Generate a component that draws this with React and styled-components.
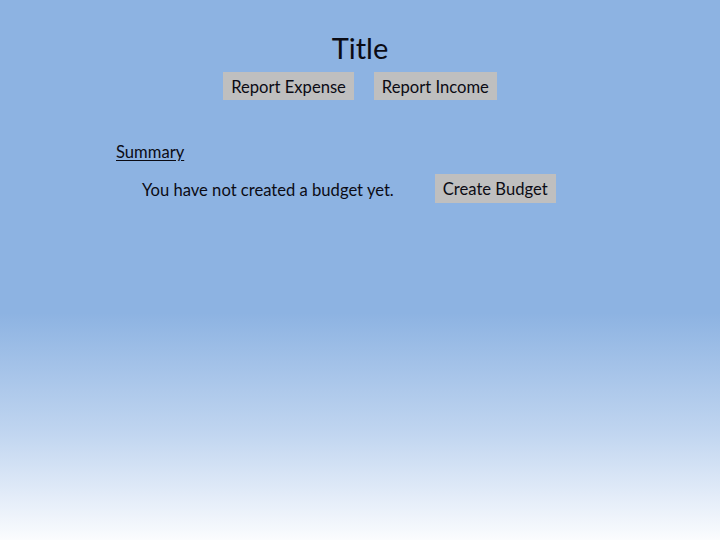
import React from "react";
import styled, { createGlobalStyle } from "styled-components";

const GlobalStyle = createGlobalStyle`
  html, body {
    margin: 0;
    padding: 0;
  }
  body {
    font-family: Lato, "Open Sans", sans-serif;
    color: #0b0b14;
  }
`;

const Page = styled.div`
  min-height: 540px;
  width: 720px;
  background: linear-gradient(to bottom, #8db3e2 0%, #8db3e2 58%, #c0d5f0 80%, #fbfcfe 100%);
  display: flex;
  flex-direction: column;
`;

const Header = styled.header`
  display: flex;
  flex-direction: column;
  align-items: center;
  padding-top: 30px;
`;

const Title = styled.h1`
  margin: 0;
  font-size: 29px;
  font-weight: 400;
  line-height: 36px;
`;

const Actions = styled.div`
  display: flex;
  gap: 20px;
  margin-top: 6px;
`;

const Button = styled.button`
  border: none;
  border-radius: 0;
  background: #bfbfbf;
  color: #0b0b14;
  font-family: inherit;
  font-size: 16.6px;
  line-height: ${(p) => (p.$tall ? "27px" : "26px")};
  padding: 2px 8px 0;
  cursor: pointer;
`;

const Summary = styled.section`
  padding-left: 116px;
  margin-top: 42px;
`;

const SummaryHeading = styled.h2`
  margin: 0;
  font-size: 16.6px;
  font-weight: 400;
  line-height: 20px;
  text-decoration: underline;
  text-underline-offset: 2px;
`;

const SummaryRow = styled.div`
  display: flex;
  align-items: center;
  gap: 41px;
  padding-left: 26px;
  margin-top: 12px;
`;

const Message = styled.p`
  margin: 0;
  padding-top: 3px;
  font-size: 16.6px;
`;

export default function App() {
  return (
    <>
      <GlobalStyle />
      <Page>
        <Header>
          <Title>Title</Title>
          <Actions>
            <Button>Report Expense</Button>
            <Button>Report Income</Button>
          </Actions>
        </Header>
        <Summary>
          <SummaryHeading>Summary</SummaryHeading>
          <SummaryRow>
            <Message>You have not created a budget yet.</Message>
            <Button $tall>Create Budget</Button>
          </SummaryRow>
        </Summary>
      </Page>
    </>
  );
}
